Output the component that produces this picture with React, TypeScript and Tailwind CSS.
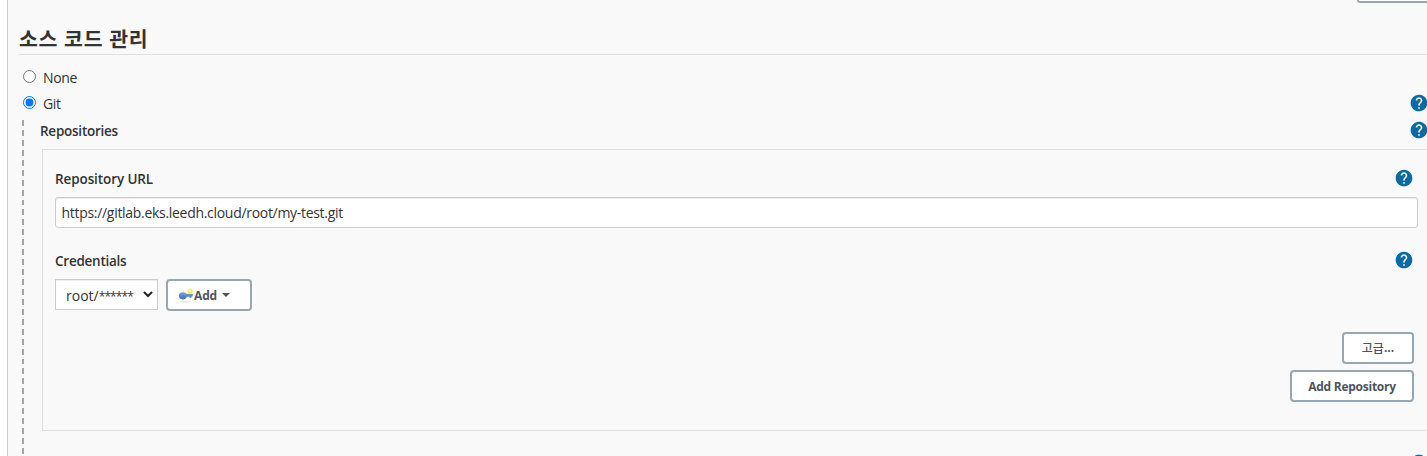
import React from 'react';
import { MdHelp } from 'react-icons/md';

function Help() {
  return (
    <button type="button" aria-label="Help" className="block size-5 shrink-0 text-[#0b6aa2]">
      <MdHelp size={20} />
    </button>
  );
}

function KeyIcon() {
  return (
    <svg width="16" height="16" viewBox="0 0 16 16" className="shrink-0">
      <defs>
        <linearGradient id="key" x1="0" y1="0" x2="0" y2="1">
          <stop offset="0" stopColor="#7ba3d4" />
          <stop offset="1" stopColor="#3f72ae" />
        </linearGradient>
      </defs>
      <ellipse cx="7" cy="13.800" rx="6" ry="0.9" fill="#e9e9e9" />
      <path
        d="M0.800 7.800c0-2.200 1.700-3.600 4-3.600 1.700 0 3 .5 3.800 1.600h6.200v2.600l-1.300.2v1.200h-2V8.700H8.900C8.300 10.400 6.800 11.400 4.800 11.400c-2.300 0-4-1.400-4-3.600z"
        fill="url(#key)"
      />
      <circle cx="12.200" cy="3" r="1.800" fill="#fffde0" stroke="#f5ee50" strokeWidth="1.400" />
    </svg>
  );
}

const outlined =
  "flex h-8 items-center rounded-[4px] border-2 border-[#98a6b0] bg-white text-[12px] text-[#4d545d]";

export default function App() {
  return (
    <div className="h-[456px] w-[1427px] overflow-hidden bg-white pl-[7px] font-['Open_Sans','Noto_Sans_CJK_KR',sans-serif] text-[14px] leading-5 text-[#333]">
      <main className="h-full border-l border-[#ccc] bg-[#f9f9f9]">
        <div className="flex h-[3px] justify-end">
          <div className="h-[3px] w-[70px] rounded-bl-[3px] border-b-2 border-l-2 border-[#98a6b0] bg-white" />
        </div>
        <h2 className="ml-[11px] flex h-[52px] items-end border-b border-[#e0e0e0] pb-[1px] font-['Noto_Sans_CJK_KR',sans-serif] text-[20.500px] font-bold leading-[29px] tracking-[0.750px] [word-spacing:0.500px]">
          소스 코드 관리
        </h2>

        <label className="mt-[12px] flex h-[21px] items-start pl-[15px]">
          <input type="radio" name="scm" className="mt-[3px] size-[13px]" />
          <span className="ml-[7px] mt-[1px] tracking-[-0.350px]">None</span>
        </label>
        <div className="mt-[5px] flex h-[27px] items-start justify-between">
          <label className="flex items-start pl-[15px]">
            <input type="radio" name="scm" defaultChecked className="mt-[3px] size-[13px] accent-[#0075ff]" />
            <span className="ml-[7px] mt-[1px] tracking-[-0.400px]">Git</span>
          </label>
          <div className="-mr-[2px]"><Help /></div>
        </div>

        <section className="flex h-[336px] pl-[14px]">
          <div className="h-full w-[2px] shrink-0 bg-[repeating-linear-gradient(180deg,#a5a5a5_0px,#a5a5a5_5.940px,transparent_5.940px,transparent_9.940px)]" />
          <div className="min-w-0 grow">
            <div className="-mr-[2px] flex h-[29px] justify-between pl-[16px]">
              <span className="mt-[1px] text-[13.500px] font-semibold tracking-[-0.250px]">Repositories</span>
              <Help />
            </div>
            <div className="ml-[18px] h-[282px] border-y border-l border-[#dedede] pl-[12px]">
              <div className="flex h-[47px] justify-between pr-[13px] pt-[18px]">
                <span className="mt-[1px] text-[13.500px] font-semibold tracking-[-0.100px]">Repository URL</span>
                <Help />
              </div>
              <input
                defaultValue="https://gitlab.eks.leedh.cloud/root/my-test.git"
                className="block h-[31px] w-[1363px] rounded-[3px] border border-[#ccc] bg-white pb-px pl-[5.500px] pr-[6px] tracking-[-0.300px] shadow-[inset_0_1px_1px_rgba(0,0,0,0.075)] outline-none"
              />
              <div className="mt-[22px] flex h-[29px] justify-between pr-[13px]">
                <span className="mt-[1px] text-[13.500px] font-semibold tracking-[-0.250px]">Credentials</span>
                <Help />
              </div>
              <div className="flex h-8 items-start gap-2">
                <button type="button" className="flex h-[31px] w-[103px] items-center justify-between border border-[#ccc] bg-white pl-[10px] pr-[4px] shadow-[inset_0_1px_1px_rgba(0,0,0,0.075)]">
                  <span className="pt-[4px]">
                    <span>root/</span>
                    <span className="text-[12px] tracking-[-0.900px]">******</span>
                  </span>
                  <svg width="10" height="7" viewBox="0 0 10 7" fill="none" stroke="#222" strokeWidth="2">
                    <path d="M1 1l4 4 4-4" />
                  </svg>
                </button>
                <button type="button" className={`${outlined} w-[86px] pl-[10px] pt-[1px] font-bold`}>
                  <KeyIcon />
                  <span className="tracking-[-0.150px]">Add</span>
                  <svg width="8" height="4" viewBox="0 0 8 4" className="mb-px ml-[5px]">
                    <path d="M0 0h8L4 4z" fill="#4d545d" />
                  </svg>
                </button>
              </div>
              <div className="mt-[21px] flex flex-col items-end gap-[6px] pr-[13px]">
                <button type="button" className={`${outlined} w-[72px] justify-center pb-px font-bold`}>
                  <span className="font-['Noto_Sans_CJK_KR',sans-serif] font-medium">고급</span>...
                </button>
                <button type="button" className={`${outlined} w-[124px] justify-center pt-[1px] font-bold tracking-[-0.250px]`}>Add Repository</button>
              </div>
            </div>
            <div className="-mr-[2px] mt-[22px] flex justify-end">
              <Help />
            </div>
          </div>
        </section>
      </main>
    </div>
  );
}
